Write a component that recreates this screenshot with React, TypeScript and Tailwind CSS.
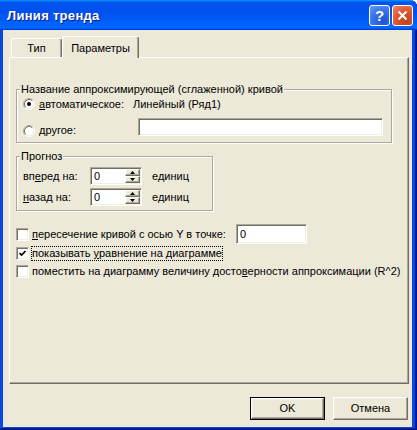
import React from 'react';

const sunken =
  'bg-white border border-t-[#aca899] border-l-[#aca899] border-b-white border-r-white shadow-[inset_1px_1px_0_#716f64,inset_-1px_-1px_0_#f1efe2]';
const raised =
  'bg-[#ece9d8] border border-t-white border-l-white border-b-[#716f64] border-r-[#716f64] shadow-[inset_-1px_-1px_0_#aca899,inset_1px_1px_0_#f1efe2]';

const Radio: React.FC<{ checked?: boolean }> = ({ checked }) => (
  <svg width="12" height="12" viewBox="0 0 12 12" className="shrink-0">
    <circle cx="6" cy="6" r="4.5" fill="#fff" />
    <path d="M2.11 9.89 A5.5 5.5 0 0 1 9.89 2.11" fill="none" stroke="#aca899" />
    <path d="M9.89 2.11 A5.5 5.5 0 0 1 2.11 9.89" fill="none" stroke="#fff" />
    <path d="M2.82 9.18 A4.5 4.5 0 0 1 9.18 2.82" fill="none" stroke="#716f64" />
    <path d="M9.18 2.82 A4.5 4.5 0 0 1 2.82 9.18" fill="none" stroke="#f1efe2" />
    {checked && <circle cx="6" cy="6" r="2" fill="#000" />}
  </svg>
);

const Checkbox: React.FC<{ checked?: boolean }> = ({ checked }) => (
  <div className={`w-[13px] h-[13px] shrink-0 flex items-center justify-center ${sunken}`}>
    {checked && (
      <svg width="7" height="7" viewBox="0 0 7 7">
        <path d="M0.5 3 L2.5 5 L6.5 1" fill="none" stroke="#000" strokeWidth="1.7" />
      </svg>
    )}
  </div>
);

const Edit: React.FC<{ className?: string; value?: string }> = ({ className = '', value = '' }) => (
  <div className={`flex items-center pl-[2px] ${sunken} ${className}`}>{value}</div>
);

const Arrow: React.FC<{ up?: boolean }> = ({ up }) => (
  <svg width="5" height="3" viewBox="0 0 5 3">
    <polygon points={up ? '2.5,0 5,3 0,3' : '0,0 5,0 2.5,3'} fill="#000" />
  </svg>
);

const SpinEdit: React.FC = () => (
  <div className={`w-[52px] h-[18px] flex p-[1px] ${sunken}`}>
    <div className="flex-1 pl-[2px] flex items-center">0</div>
    <div className="w-[15px] flex flex-col">
      <div className={`flex-1 flex items-center justify-center ${raised}`}>
        <Arrow up />
      </div>
      <div className={`flex-1 flex items-center justify-center ${raised}`}>
        <Arrow />
      </div>
    </div>
  </div>
);

const GroupBox: React.FC<{ title: string; className?: string; children: React.ReactNode }> = ({
  title,
  className = '',
  children,
}) => (
  <fieldset
    className={`border border-[#aca899] shadow-[inset_1px_1px_0_#fff,1px_1px_0_#fff] ${className}`}
  >
    <legend className="ml-[3px] px-[1px] bg-[#ece9d8] leading-[13px]">{title}</legend>
    {children}
  </fieldset>
);

const TitleBar: React.FC = () => (
  <div className="h-[30px] shrink-0 flex items-center pl-[7px] pr-[4px] rounded-tr-[7px] bg-[linear-gradient(180deg,#0997ff,#0053ee_8%,#0050ee_40%,#0066ff_88%,#0066ff_93%,#005bff_95%,#003dd7_96%,#003dd7)]">
    <div className="flex-1 text-white font-bold text-[13px] tracking-[0.3px] text-shadow-[1px_1px_0_#0a1a8c]">
      Линия тренда
    </div>
    <div className="flex gap-[2px]">
      <div className="w-[21px] h-[21px] rounded-[3px] border border-white flex items-center justify-center bg-[radial-gradient(circle_at_70%_80%,#1d50d8,#3a73ee_55%,#6b9bf9)] text-white font-bold text-[15px] leading-none">
        ?
      </div>
      <div className="w-[21px] h-[21px] rounded-[3px] border border-white flex items-center justify-center bg-[radial-gradient(circle_at_70%_80%,#c1411e,#e0582f_55%,#ef8b6c)]">
        <svg width="11" height="11" viewBox="0 0 11 11">
          <path d="M1.5 1.5 L9.5 9.5 M9.5 1.5 L1.5 9.5" stroke="#fff" strokeWidth="2" />
        </svg>
      </div>
    </div>
  </div>
);

export default function App() {
  return (
    <div className="w-[417px] h-[430px] flex flex-col bg-white text-black text-[11px] leading-[13px] font-[family-name:'Liberation_Sans',Arial,sans-serif]">
      <div className="flex-1 flex flex-col rounded-tr-[7px] bg-[#0a46e0] shadow-[inset_-1px_-1px_0_#00138c,inset_-2px_-2px_0_#001ea0]">
        <TitleBar />
        <div className="flex-1 flex flex-col pl-[3px] pr-[5px] pb-[3px]">
          <div className="flex-1 flex flex-col bg-[#ece9d8] pl-[6px] pr-[3px] pt-[6px] pb-[7px]">
            {/* tabs */}
            <div className="h-[21px] flex items-end pl-[2px]">
              <div className="w-[51px] h-[19px] flex justify-center pt-[3px] border-t border-l border-r border-t-white border-l-white border-r-[#716f64] rounded-t-[3px] shadow-[inset_-1px_0_0_#aca899]">
                Тип
              </div>
              <div className="relative z-10 -mb-px w-[77px] h-[22px] flex justify-center pt-[5px] bg-[#ece9d8] border-t border-l border-r border-t-white border-l-white border-r-[#716f64] rounded-t-[3px] shadow-[inset_-1px_0_0_#aca899]">
                Параметры
              </div>
            </div>

            {/* panel */}
            <div className="h-[327px] flex flex-col border border-t-white border-l-white border-r-[#716f64] border-b-[#716f64] shadow-[inset_-1px_-1px_0_#aca899]">
              <GroupBox
                title="Название аппроксимирующей (сглаженной) кривой"
                className="mt-[25px] ml-[6px] w-[376px] h-[60px]"
              >
                <div className="flex items-center h-[16px] pl-[6px]">
                  <Radio checked />
                  <span className="ml-[4px] w-[94px]">
                    <u>а</u>втоматическое:
                  </span>
                  <span>Линейный (Ряд1)</span>
                </div>
                <div className="flex items-start h-[18px] mt-[6px] pl-[6px]">
                  <div className="flex items-center mt-[6px]">
                    <Radio />
                    <span className="ml-[4px] w-[99px]">
                      <u>д</u>ругое:
                    </span>
                  </div>
                  <Edit className="w-[245px] h-[18px]" />
                </div>
              </GroupBox>

              <GroupBox title="Прогноз" className="mt-[7px] ml-[6px] w-[197px] h-[61px]">
                <div className="flex items-center h-[18px] mt-[4px] pl-[6px]">
                  <span className="w-[67px]">
                    вп<u>е</u>ред на:
                  </span>
                  <SpinEdit />
                  <span className="ml-[10px]">единиц</span>
                </div>
                <div className="flex items-center h-[18px] mt-[3px] pl-[6px]">
                  <span className="w-[67px]">
                    <u>н</u>азад на:
                  </span>
                  <SpinEdit />
                  <span className="ml-[10px]">единиц</span>
                </div>
              </GroupBox>

              <div className="flex items-center h-[20px] mt-[13px] pl-[6px]">
                <Checkbox />
                <span className="ml-[2px] w-[205px] border border-dotted border-transparent">
                  <u>п</u>ересечение кривой с осью Y в точке:
                </span>
                <Edit className="w-[71px] h-[20px] pl-[3px]" value="0" />
              </div>
              <div className="flex items-center h-[17px] mt-[1px] pl-[6px]">
                <Checkbox checked />
                <span className="ml-[2px] border border-dotted border-black">
                  показывать <u>у</u>равнение на диаграмме
                </span>
              </div>
              <div className="flex items-center h-[18px] pl-[6px]">
                <Checkbox />
                <span className="ml-[2px] border border-dotted border-transparent">
                  поместить на диаграмму величину досто<u>в</u>ерности аппроксимации (R^2)
                </span>
              </div>
            </div>

            {/* buttons */}
            <div className="mt-[13px] flex justify-end gap-[8px] pr-[1px]">
              <div className="w-[75px] h-[23px] border border-black flex">
                <div className={`flex-1 flex items-center justify-center ${raised}`}>OK</div>
              </div>
              <div className={`w-[75px] h-[23px] flex items-center justify-center ${raised}`}>Отмена</div>
            </div>
          </div>
        </div>
      </div>
    </div>
  );
}
